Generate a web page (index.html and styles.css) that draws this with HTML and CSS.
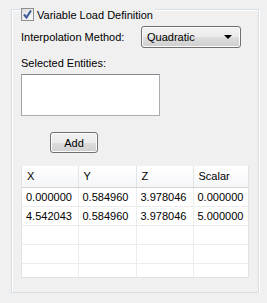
FILE: index.html
```html
<!DOCTYPE html>
<html lang="en">
<head>
  <meta charset="UTF-8">
  <title>Variable Load Definition</title>
  <link rel="stylesheet" href="styles.css">
</head>
<body>
  <div class="group">
    <div class="legend">
      <span class="check">
        <svg width="9" height="9" viewBox="0 0 9 9"><path d="M1 4.5 L3.5 7.5 L8 0.5" fill="none" stroke="#3c5a9a" stroke-width="2"/></svg>
      </span>
      <span>Variable Load Definition</span>
    </div>

    <div class="row">
      <span class="label">Interpolation Method:</span>
      <div class="combo">
        <span>Quadratic</span>
        <span class="arrow"></span>
      </div>
    </div>

    <div class="label entities-label">Selected Entities:</div>
    <div class="listbox"></div>

    <button class="add">Add</button>

    <div class="table-wrap">
      <table class="grid">
        <thead>
          <tr><th class="c1">X</th><th class="c2">Y</th><th class="c3">Z</th><th class="c4">Scalar</th></tr>
        </thead>
        <tbody>
          <tr><td>0.000000</td><td>0.584960</td><td>3.978046</td><td>0.000000</td></tr>
          <tr><td>4.542043</td><td>0.584960</td><td>3.978046</td><td>5.000000</td></tr>
          <tr><td></td><td></td><td></td><td></td></tr>
          <tr><td></td><td></td><td></td><td></td></tr>
          <tr><td></td><td></td><td></td><td></td></tr>
        </tbody>
      </table>
    </div>
  </div>
</body>
</html>
```

FILE: styles.css
```css
* { box-sizing: border-box; }
body {
  margin: 0;
  background: #f0f0f0;
  color: #000;
  font-family: "Liberation Sans", Arial, sans-serif;
  font-size: 11px;
}

.group {
  margin: 9px 8px 0 11px;
  height: 284px;
  border: 1px solid #d5dfe5;
  box-shadow: inset 1px 1px 0 #fff, 1px 1px 0 #fff;
  padding: 0 9px;
}

.legend {
  display: flex;
  align-items: center;
  gap: 3px;
  width: max-content;
  height: 13px;
  margin-top: -2px;
  padding-right: 2px;
  background: #f0f0f0;
}

.check {
  width: 13px;
  height: 13px;
  border: 1px solid #8e8f8f;
  background: linear-gradient(135deg, #dcdcdc, #fbfbfb);
  display: flex;
  align-items: center;
  justify-content: center;
}

.row {
  display: flex;
  align-items: center;
  margin-top: 5px;
  height: 22px;
}
.row .label { width: 120px; }

.combo {
  width: 100px;
  height: 22px;
  border: 1px solid #707070;
  border-radius: 3px;
  background: linear-gradient(#f2f2f2 0%, #ebebeb 50%, #dddddd 51%, #cfcfcf 100%);
  box-shadow: inset 0 0 0 1px #fcfcfc;
  display: flex;
  align-items: center;
  justify-content: space-between;
  padding: 0 8px 0 5px;
}
.arrow {
  width: 0;
  height: 0;
  border-left: 4px solid transparent;
  border-right: 4px solid transparent;
  border-top: 4px solid #000;
}

.entities-label {
  margin-top: 9px;
}

.listbox {
  margin-top: 5px;
  width: 139px;
  height: 42px;
  background: #fff;
  border: 1px solid #abadb3;
  border-top-color: #828790;
  border-left-color: #a0a3a8;
}

.add {
  display: block;
  margin: 16px 0 0 29px;
  width: 48px;
  height: 21px;
  padding: 0;
  font: inherit;
  color: #000;
  border: 1px solid #707070;
  border-radius: 3px;
  background: linear-gradient(#f2f2f2 0%, #ebebeb 50%, #dddddd 51%, #cfcfcf 100%);
  box-shadow: inset 0 0 0 1px #fcfcfc;
}

.table-wrap {
  margin-top: 13px;
  width: 228px;
  height: 112px;
  overflow: hidden;
  background: #fff;
  border: 1px solid #e3e3e3;
  border-top: none;
}

.grid {
  border-collapse: collapse;
  table-layout: fixed;
  width: 228px;
}
.grid th {
  height: 21px;
  font-weight: normal;
  text-align: left;
  padding: 0 5px;
  background: linear-gradient(#ffffff, #f4f5f7);
  border-right: 1px solid #e3e4e6;
  border-bottom: 1px solid #d5d5d5;
}
.grid .c1 { width: 56px; }
.grid .c2 { width: 58px; }
.grid .c3 { width: 57px; }
.grid .c4 { width: 57px; }
.grid td {
  height: 19px;
  padding: 0 4px;
  border-right: 1px solid #ececec;
  border-bottom: 1px solid #ececec;
  white-space: nowrap;
  overflow: hidden;
}
```
